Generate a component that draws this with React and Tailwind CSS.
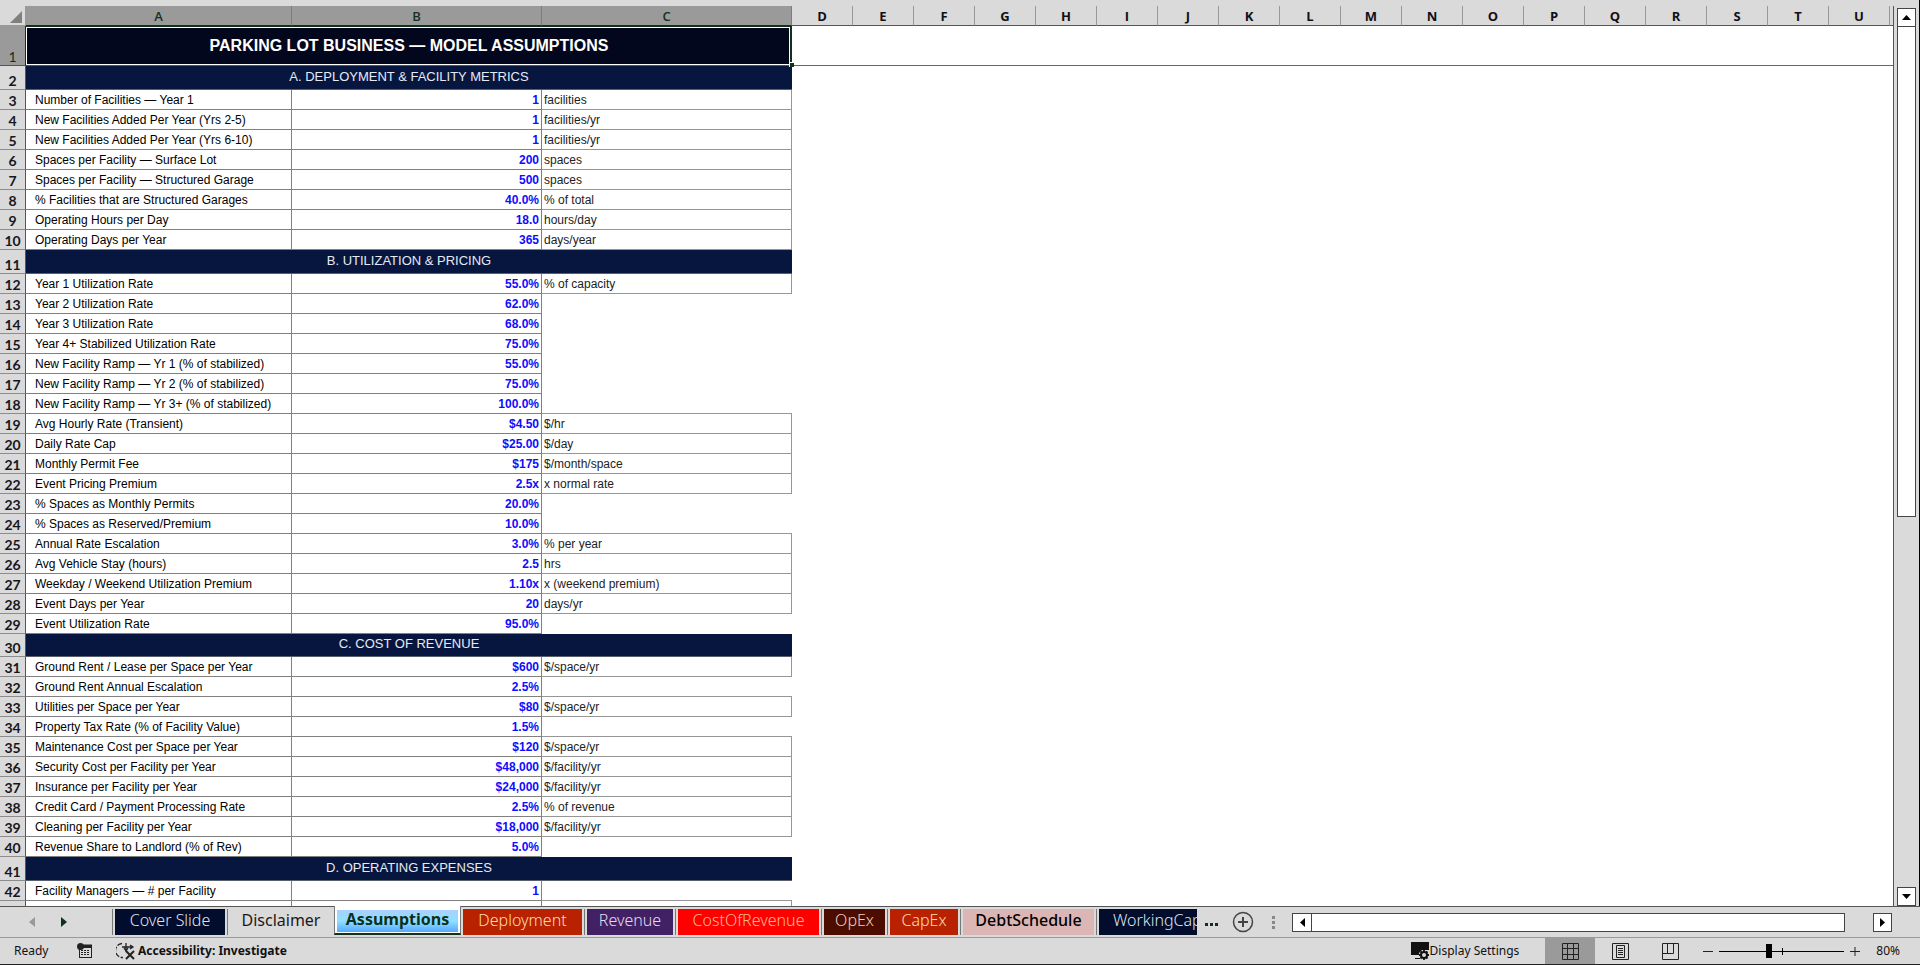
import React from "react";

const LETTERS = "DEFGHIJKLMNOPQRSTU".split("");

const ROWS = [
  { n: 2, section: "A. DEPLOYMENT & FACILITY METRICS" },
  { n: 3, a: "Number of Facilities — Year 1", b: "1", c: "facilities" },
  { n: 4, a: "New Facilities Added Per Year (Yrs 2-5)", b: "1", c: "facilities/yr" },
  { n: 5, a: "New Facilities Added Per Year (Yrs 6-10)", b: "1", c: "facilities/yr" },
  { n: 6, a: "Spaces per Facility — Surface Lot", b: "200", c: "spaces" },
  { n: 7, a: "Spaces per Facility — Structured Garage", b: "500", c: "spaces" },
  { n: 8, a: "% Facilities that are Structured Garages", b: "40.0%", c: "% of total" },
  { n: 9, a: "Operating Hours per Day", b: "18.0", c: "hours/day" },
  { n: 10, a: "Operating Days per Year", b: "365", c: "days/year" },
  { n: 11, section: "B. UTILIZATION & PRICING" },
  { n: 12, a: "Year 1 Utilization Rate", b: "55.0%", c: "% of capacity" },
  { n: 13, a: "Year 2 Utilization Rate", b: "62.0%" },
  { n: 14, a: "Year 3 Utilization Rate", b: "68.0%" },
  { n: 15, a: "Year 4+ Stabilized Utilization Rate", b: "75.0%" },
  { n: 16, a: "New Facility Ramp — Yr 1 (% of stabilized)", b: "55.0%" },
  { n: 17, a: "New Facility Ramp — Yr 2 (% of stabilized)", b: "75.0%" },
  { n: 18, a: "New Facility Ramp — Yr 3+ (% of stabilized)", b: "100.0%" },
  { n: 19, a: "Avg Hourly Rate (Transient)", b: "$4.50", c: "$/hr" },
  { n: 20, a: "Daily Rate Cap", b: "$25.00", c: "$/day" },
  { n: 21, a: "Monthly Permit Fee", b: "$175", c: "$/month/space" },
  { n: 22, a: "Event Pricing Premium", b: "2.5x", c: "x normal rate" },
  { n: 23, a: "% Spaces as Monthly Permits", b: "20.0%" },
  { n: 24, a: "% Spaces as Reserved/Premium", b: "10.0%" },
  { n: 25, a: "Annual Rate Escalation", b: "3.0%", c: "% per year" },
  { n: 26, a: "Avg Vehicle Stay (hours)", b: "2.5", c: "hrs" },
  { n: 27, a: "Weekday / Weekend Utilization Premium", b: "1.10x", c: "x (weekend premium)" },
  { n: 28, a: "Event Days per Year", b: "20", c: "days/yr" },
  { n: 29, a: "Event Utilization Rate", b: "95.0%" },
  { n: 30, section: "C. COST OF REVENUE", short: true },
  { n: 31, a: "Ground Rent / Lease per Space per Year", b: "$600", c: "$/space/yr" },
  { n: 32, a: "Ground Rent Annual Escalation", b: "2.5%" },
  { n: 33, a: "Utilities per Space per Year", b: "$80", c: "$/space/yr" },
  { n: 34, a: "Property Tax Rate (% of Facility Value)", b: "1.5%" },
  { n: 35, a: "Maintenance Cost per Space per Year", b: "$120", c: "$/space/yr" },
  { n: 36, a: "Security Cost per Facility per Year", b: "$48,000", c: "$/facility/yr" },
  { n: 37, a: "Insurance per Facility per Year", b: "$24,000", c: "$/facility/yr" },
  { n: 38, a: "Credit Card / Payment Processing Rate", b: "2.5%", c: "% of revenue" },
  { n: 39, a: "Cleaning per Facility per Year", b: "$18,000", c: "$/facility/yr" },
  { n: 40, a: "Revenue Share to Landlord (% of Rev)", b: "5.0%" },
  { n: 41, section: "D. OPERATING EXPENSES" },
  { n: 42, a: "Facility Managers — # per Facility", b: "1", openBottom: true },
];

const TABS = [
  { label: "Cover Slide", cls: "w-[110px] bg-[#020c2c] font-light text-[#dfe6f2]" },
  { label: "Disclaimer", cls: "w-[102px] text-[#1c1820]" },
  { label: "Assumptions", active: true },
  { label: "Deployment", noRule: true, cls: "w-[119px] bg-[#b82200] font-light text-[#ffdcae]" },
  { label: "Revenue", cls: "w-[86px] bg-[#412063] font-light text-[#e4dcf0]" },
  { label: "CostOfRevenue", cls: "w-[141px] bg-[#ff0000] font-light text-[#ffb48c]" },
  { label: "OpEx", cls: "w-[61px] bg-[#4d0c00] font-light text-[#f0d0b8]" },
  { label: "CapEx", cls: "w-[68px] bg-[#b82200] font-light text-[#ffdcae]" },
  { label: "DebtSchedule", cls: "w-[131px] bg-[#dbb6b4] text-black font-medium" },
];

function RowHead({ n }) {
  return (
    <th
      scope="row"
      className="border-r border-b border-r-[#555] border-b-[#8c8c8c] bg-[#dadada] p-0 align-bottom text-center font-['Lato',sans-serif] text-[14px] leading-[17px] font-bold text-[#16161c]"
    >
      {n}
    </th>
  );
}

function Row({ row, next }) {
  if (row.section) {
    return (
      <tr className={row.short ? "h-[23px]" : "h-6"}>
        <RowHead n={row.n} />
        <td
          colSpan={3}
          className="border-b border-[#5a5f6c] bg-[#07163f] px-0 pt-0 pb-[2px] text-center text-[13px] leading-[20px] text-[#e6eaf4]"
        >
          {row.section}
        </td>
      </tr>
    );
  }
  const boxed = Boolean(row.c);
  const lineBelow = boxed || row.openBottom || (next && next.c);
  return (
    <tr className="h-5">
      <RowHead n={row.n} />
      <td className="overflow-hidden border-r border-b border-[#808080] py-0 pr-0 pl-[9px] text-[12px] leading-[18px] whitespace-nowrap text-black">
        {row.a}
      </td>
      <td className="border-r border-b border-[#808080] py-0 pr-[2px] pl-0 text-right text-[12px] leading-[18px] font-bold text-[#0d0dff]">
        {row.b}
      </td>
      <td
        className={
          "py-0 pr-0 pl-[2px] text-[12px] leading-[18px] text-[#222] " +
          (boxed ? "border-r border-[#969696] " : "") +
          (lineBelow ? "border-b border-[#969696]" : "")
        }
      >
        {row.c}
      </td>
    </tr>
  );
}

function Sheet() {
  return (
    <table className="w-full table-fixed border-separate border-spacing-0 font-['Liberation_Sans',Arial,sans-serif]">
      <colgroup>
        <col className="w-[26px]" />
        <col className="w-[266px]" />
        <col className="w-[250px]" />
        <col className="w-[250px]" />
        {LETTERS.map((l) => (
          <col key={l} className="w-[61px]" />
        ))}
        <col />
      </colgroup>
      <thead>
        <tr className="h-5 font-['Open_Sans','Noto_Sans',sans-serif] text-[13px] leading-[17px]">
          <th className="border-r border-b border-[#9a9a9a] bg-[#dadada] p-0 align-bottom">
            <svg className="mb-[2px] ml-[10px] block h-3 w-3" viewBox="0 0 12 12" aria-hidden="true">
              <path d="M12 0V12H0Z" fill="#808080" />
            </svg>
          </th>
          {["A", "B", "C"].map((l) => (
            <th key={l} scope="col" className="border-r border-b border-r-[#7d7d7d] border-b-[#0e3318] bg-[#9a9a9a] p-0 align-bottom font-semibold text-[#15301f]">
              {l}
            </th>
          ))}
          {LETTERS.map((l) => (
            <th key={l} scope="col" className="border-r border-b border-r-[#999] border-b-[#555] bg-[#dadada] p-0 align-bottom font-bold text-[#101018]">
              {l}
            </th>
          ))}
          <th className="border-b border-[#555] bg-[#dadada] p-0" />
        </tr>
      </thead>
      <tbody>
        <tr className="h-10">
          <th
            scope="row"
            className="border-r border-b border-r-[#0e3318] border-b-[#555] bg-[#9a9a9a] p-0 align-bottom text-center font-['Lato',sans-serif] text-[14px] leading-[17px] font-normal text-[#15301f]"
          >
            1
          </th>
          <td
            colSpan={3}
            className="relative border-b border-[#555] bg-[#03071e] p-0 text-center text-[16px] leading-[20px] font-bold text-white"
          >
            PARKING LOT BUSINESS — MODEL ASSUMPTIONS
            <span className="pointer-events-none absolute inset-0 border-t border-r-2 border-[#0e3318]">
              <span className="block h-full border border-white" />
            </span>
            <span className="absolute -right-[2px] -bottom-[2px] h-[5px] w-[5px] border-t border-l border-white bg-[#0e3318]" />
          </td>
          <td colSpan={LETTERS.length + 1} className="border-b border-[#666] p-0" />
        </tr>
        {ROWS.map((row, i) => (
          <Row key={row.n} row={row} next={ROWS[i + 1]} />
        ))}
        <tr className="h-5">
          <th className="border-r border-[#555] bg-[#dadada] p-0" />
          <td className="border-r border-[#808080] p-0" />
          <td className="border-r border-[#808080] p-0" />
          <td className="border-r border-[#969696] p-0" />
        </tr>
      </tbody>
    </table>
  );
}

const SCROLL_BTN = "flex shrink-0 items-center justify-center border border-[#444] bg-white";

function VerticalScroll() {
  return (
    <div className="flex w-[26px] shrink-0 flex-col items-center border-r border-black px-[3px] pt-2">
      <button aria-label="Scroll up" className={SCROLL_BTN + " h-[19px] w-[19px]"}>
        <svg className="h-[5px] w-[9px]" viewBox="0 0 9 5" aria-hidden="true">
          <path d="M4.500 0L9 5H0Z" fill="#000" />
        </svg>
      </button>
      <div className="flex w-[19px] flex-1 flex-col">
        <div className="h-[57%] border border-t-0 border-[#444] bg-white" />
      </div>
      <button aria-label="Scroll down" className={SCROLL_BTN + " h-[19px] w-[19px]"}>
        <svg className="h-[5px] w-[9px]" viewBox="0 0 9 5" aria-hidden="true">
          <path d="M4.500 5L9 0H0Z" fill="#000" />
        </svg>
      </button>
    </div>
  );
}

function TabStrip() {
  return (
    <div className="flex h-8 shrink-0 border-b border-[#999]">
      <div className="flex w-[112px] shrink-0 items-center border-t border-[#555] pl-[29px]">
        <button aria-label="Previous sheets" className="mr-[26px]">
          <svg className="h-3 w-[6px]" viewBox="0 0 6 12" aria-hidden="true">
            <path d="M6 1V11L0 6Z" fill="#999" />
          </svg>
        </button>
        <button aria-label="Next sheets">
          <svg className="h-3 w-[6px]" viewBox="0 0 6 12" aria-hidden="true">
            <path d="M0 1V11L6 6Z" fill="#0e3318" />
          </svg>
        </button>
      </div>
      <nav aria-label="Sheets" className="flex shrink-0 font-['Noto_Sans','Open_Sans',sans-serif] text-[16px] leading-[20px]">
        {TABS.map((t) =>
          t.active ? (
            <button
              key={t.label}
              aria-current="page"
              className="h-[29px] w-[127px] border-x border-b-2 border-x-[#777] border-b-[#0e3318] bg-white px-[2px] pt-1 pb-[1px] font-bold text-[#0c3020]"
            >
              <span className="block h-[22px] bg-linear-to-b from-[#a8d0ff] via-[#8fe0ff] to-[#55a8ff] leading-[19px]">
                {t.label}
              </span>
            </button>
          ) : (
            <div key={t.label} className="flex h-[29px] border-t border-[#555] pt-[2px] pr-[2px]">
              {!t.noRule && <span className="border-l border-[#777]" />}
              <button className={"ml-[2px] h-[26px] pb-[5px] text-center " + t.cls}>{t.label}</button>
            </div>
          )
        )}
        <div className="flex h-[29px] border-t border-[#555] pt-[2px]">
          <span className="border-l border-[#777]" />
          <button className="ml-[2px] h-[26px] w-[98px] overflow-hidden bg-[#020c2c] pb-[5px] pl-[14px] text-left font-light whitespace-nowrap text-[#dfe6f2]">
            WorkingCapital
          </button>
        </div>
      </nav>
      <div className="flex min-w-0 flex-1 items-center border-t border-[#555] pl-2">
        <button aria-label="More sheets" className="mr-[14px] flex gap-[2px] pt-1">
          <span className="size-[3px] bg-[#0e3318]" />
          <span className="size-[3px] bg-[#0e3318]" />
          <span className="size-[3px] bg-[#0e3318]" />
        </button>
        <button aria-label="New sheet">
          <svg className="size-[22px]" viewBox="0 0 22 22" fill="none" stroke="#444" aria-hidden="true">
            <circle cx="11" cy="11" r="9.500" strokeWidth="1.500" />
            <path d="M11 6V16M6 11H16" strokeWidth="2" />
          </svg>
        </button>
        <span className="ml-[18px] flex flex-col gap-[2px]">
          <span className="size-[3px] bg-[#888]" />
          <span className="size-[3px] bg-[#888]" />
          <span className="size-[3px] bg-[#888]" />
        </span>
        <div className="ml-[17px] flex min-w-0 flex-1 items-center pr-7">
          <button aria-label="Scroll left" className={SCROLL_BTN + " h-[19px] w-5"}>
            <svg className="h-[9px] w-[5px]" viewBox="0 0 5 9" aria-hidden="true">
              <path d="M5 0V9L0 4.500Z" fill="#000" />
            </svg>
          </button>
          <div className="mr-7 h-[19px] flex-1 border border-l-0 border-[#444] bg-white" />
          <button aria-label="Scroll right" className={SCROLL_BTN + " h-[19px] w-[19px]"}>
            <svg className="h-[9px] w-[5px]" viewBox="0 0 5 9" aria-hidden="true">
              <path d="M0 0V9L5 4.500Z" fill="#000" />
            </svg>
          </button>
        </div>
      </div>
    </div>
  );
}

function StatusBar() {
  return (
    <footer className="flex h-[27px] shrink-0 items-center border-b border-[#222] pl-[14px] font-['Noto_Sans','Open_Sans',sans-serif] text-[12px] text-[#111]">
      <span className="w-[63px]">Ready</span>
      <button aria-label="Record macro" className="mr-[23px]">
        <svg className="h-4 w-4" viewBox="0 0 16 16" fill="none" aria-hidden="true">
          <rect x="2.500" y="2.500" width="12" height="12" stroke="#222" />
          <path d="M3 1.500H15V5H3Z" fill="#222" />
          <circle cx="3.500" cy="3.500" r="3.500" fill="#222" />
          <path d="M4 7.500H13M4 9.500H13M4 11.500H13" stroke="#222" strokeDasharray="2 1" />
        </svg>
      </button>
      <button className="flex items-center gap-[2px] font-bold">
        <svg className="h-[18px] w-5" viewBox="0 0 20 18" fill="none" stroke="#222" strokeWidth="1.300" aria-hidden="true">
          <path d="M6 1.500A7 7 0 0 0 7 15.500" strokeDasharray="5 1.500" />
          <path d="M6 5H16M10 1V8M8 6L10 9L12 6M14 3L17 5L14 7" />
          <path d="M10 9L18 17M18 9L10 17" strokeWidth="2" />
        </svg>
        Accessibility: Investigate
      </button>
      <button className="ml-auto flex items-center">
        <svg className="h-5 w-5" viewBox="0 0 20 20" aria-hidden="true">
          <path d="M1 1H19V9H12L9 12V14H1Z" fill="#111" />
          <path d="M5 17.500H10" stroke="#111" />
          <circle cx="14" cy="14" r="3" fill="#dadada" stroke="#111" strokeWidth="2" />
          <path d="M14 9V11M14 17V19M9 14H11M17 14H19M10.500 10.500L12 12M16 16L17.500 17.500M17.500 10.500L16 12M10.500 17.500L12 16" stroke="#111" strokeWidth="1.800" />
        </svg>
        Display Settings
      </button>
      <button aria-label="Normal view" aria-pressed="true" className="ml-[26px] flex h-full w-[50px] items-center justify-center bg-[#9a9a9a]">
        <svg className="size-[17px]" viewBox="0 0 17 17" fill="none" stroke="#222" aria-hidden="true">
          <path d="M.5.5H16.500V16.500H.5ZM5.500.5V16.500M11.500.5V16.500M.5 5.500H16.500M.5 11.500H16.500" />
        </svg>
      </button>
      <button aria-label="Page layout" className="flex w-[50px] justify-center">
        <svg className="size-[17px]" viewBox="0 0 17 17" fill="none" stroke="#222" aria-hidden="true">
          <path d="M.5.5H16.500V16.500H.5ZM4.500 2.500H12.500V14.500H4.500ZM6 5.500H11M6 7.500H11M6 9.500H11M6 11.500H11" />
        </svg>
      </button>
      <button aria-label="Page break preview" className="flex w-[50px] justify-center">
        <svg className="size-[17px]" viewBox="0 0 17 17" fill="none" stroke="#222" aria-hidden="true">
          <path d="M.5.5H16.500V16.500H.5ZM5.500.5V10.500M11.500.5V10.500M.5 10.500H11.500" />
        </svg>
      </button>
      <button aria-label="Zoom out" className="ml-2">
        <svg className="size-[10px]" viewBox="0 0 10 10" stroke="#222" aria-hidden="true">
          <path d="M0 5.500H10" />
        </svg>
      </button>
      <div className="relative mx-[6px] flex h-4 w-[125px] items-center">
        <span className="absolute top-2 h-px w-full bg-black" />
        <span className="absolute top-[5px] left-1/2 h-[7px] w-px bg-black" />
        <input
          type="range"
          aria-label="Zoom"
          min="10"
          max="190"
          defaultValue="80"
          className="relative h-4 w-full appearance-none bg-transparent [&::-webkit-slider-thumb]:h-[14px] [&::-webkit-slider-thumb]:w-[6px] [&::-webkit-slider-thumb]:appearance-none [&::-webkit-slider-thumb]:bg-black"
        />
      </div>
      <button aria-label="Zoom in">
        <svg className="size-[10px]" viewBox="0 0 10 10" stroke="#222" aria-hidden="true">
          <path d="M0 5.500H10M5 1V10" />
        </svg>
      </button>
      <button className="mr-5 ml-4">80%</button>
    </footer>
  );
}

export default function App() {
  return (
    <div className="flex h-screen flex-col overflow-hidden bg-[#dadada]">
      <main className="flex min-h-0 flex-1">
        <div className="min-w-0 flex-1 overflow-hidden pt-[6px]">
          <div className="h-full overflow-hidden border-r border-[#555] bg-white">
            <Sheet />
          </div>
        </div>
        <VerticalScroll />
      </main>
      <TabStrip />
      <StatusBar />
    </div>
  );
}
